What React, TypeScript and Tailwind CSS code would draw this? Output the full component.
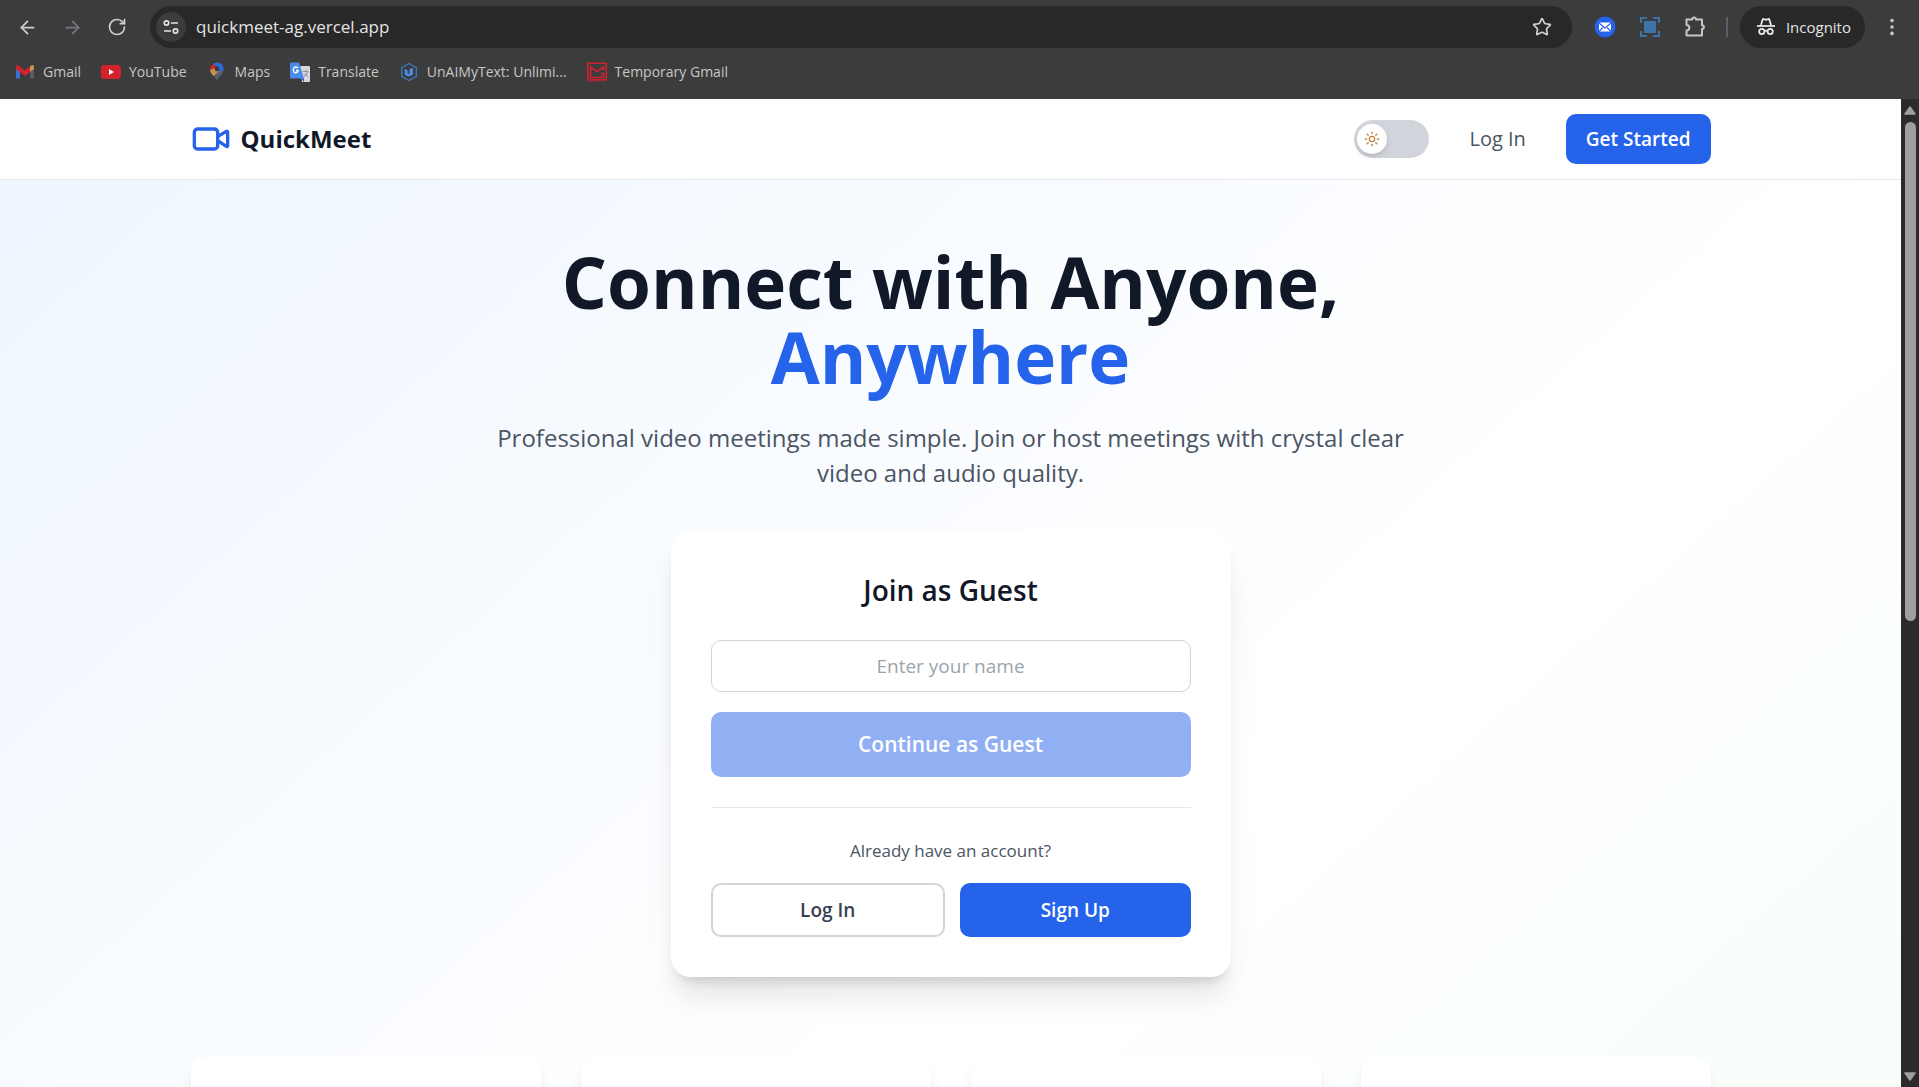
import { useState } from "react";
import type { ReactNode } from "react";
import {
  ArrowLeft,
  ArrowRight,
  EllipsisVertical,
  RotateCw,
  Star,
  Sun,
  Video,
} from "lucide-react";

type Bookmark = {
  label: string;
  icon: ReactNode;
};

function GmailIcon() {
  return (
    <svg viewBox="0 0 20 20" className="size-5">
      <path d="M1 6v10.500h4V9z" fill="#3f6fd0" />
      <path d="M15 9v7.500h4V6z" fill="#5a5b66" />
      <path d="M15 4.500 17 3q2-.5 2 2v2l-4 3z" fill="#c8954f" />
      <path d="M1 7V5q0-2.500 2.500-1.500L10 8.500l5-4V10l-5 4-9-7z" fill="#d5202e" />
    </svg>
  );
}

function YouTubeIcon() {
  return (
    <svg viewBox="0 0 20 20" className="size-5">
      <rect x="0" y="3" width="20" height="14" rx="3.500" fill="#d5202e" />
      <path d="M8 7v6l5-3z" fill="#fff" />
    </svg>
  );
}

function MapsIcon() {
  return (
    <svg viewBox="0 0 20 20" className="size-5">
      <path d="M10 19.500C9.500 16 6 13.500 4 10l9-1.500L16.500 9c-1.500 4-5.500 6-6.500 10.500z" fill="#5d5e6b" />
      <path d="M3 7.500 8 5l4 4-5.500 5C4.500 12 3 10 3 7.500z" fill="#c8954f" />
      <path d="M4 4q2.500-3 6-3.500L8 6 3.500 8Q3 6 4 4z" fill="#d5202e" />
      <path d="M6 2q6-4 10 2l.7 4L13 10 9.500 4.500z" fill="#2b6be0" />
      <circle cx="10" cy="7" r="2.400" fill="#3c3c3c" />
    </svg>
  );
}

function TranslateIcon() {
  return (
    <svg viewBox="0 0 20 20" className="size-5">
      <path d="M9 4h10q1 0 1 1v14q0 1-1 1h-7z" fill="#d5d8dc" />
      <path d="M13 9.500h5.500M16 8v1.500M17.500 10q-1 3.500-4 5M14.500 11.500l3.500 3.500" stroke="#8d9196" strokeWidth="1" fill="none" />
      <path d="M0 1.500Q0 .5 1 .5h8l5 16H1q-1 0-1-1z" fill="#4b8bea" />
      <path d="m11 16.500 3 3.500v-3.500z" fill="#2c5fb8" />
      <path d="M8 6Q5.500 4 4 6t0 4 4-.5V8.500H6" stroke="#fff" strokeWidth="1.300" fill="none" />
    </svg>
  );
}

function HexagonIcon() {
  return (
    <svg viewBox="0 0 20 20" className="size-5">
      <path d="m10 1.500 7.300 4.200v8.600L10 18.500l-7.300-4.200V5.700z" fill="none" stroke="#3f76b8" strokeWidth="1.400" />
      <path d="M5.500 7 8.500 8v3.500l2 .5V7l3.500-1v6.500L10 14.500 6 13z" fill="#4b8bea" />
    </svg>
  );
}

function TemporaryMailIcon() {
  return (
    <svg viewBox="0 0 20 20" className="size-5" fill="none" stroke="#d5202e">
      <rect x=".7" y="1.200" width="18.600" height="16.600" strokeWidth="1.400" />
      <path d="M16.500 8V5L10 9.500 3.500 5v10.500h13v-4H14" strokeWidth="1.700" />
      <path d="M1 19h18" strokeWidth="1.200" strokeDasharray="1.200 1" />
    </svg>
  );
}

const bookmarks: Bookmark[] = [
  { label: "Gmail", icon: <GmailIcon /> },
  { label: "YouTube", icon: <YouTubeIcon /> },
  { label: "Maps", icon: <MapsIcon /> },
  { label: "Translate", icon: <TranslateIcon /> },
  { label: "UnAIMyText: Unlimi...", icon: <HexagonIcon /> },
  { label: "Temporary Gmail", icon: <TemporaryMailIcon /> },
];

function SiteSettingsIcon() {
  return (
    <svg viewBox="0 0 20 20" className="size-5" fill="none" stroke="#e3e3e3" strokeWidth="1.700">
      <circle cx="5.500" cy="6" r="2.200" />
      <path d="M10 6h7M3 14h7" />
      <circle cx="14.500" cy="14" r="2.200" />
    </svg>
  );
}

function MailExtensionIcon() {
  return (
    <svg viewBox="0 0 22 22" className="size-[22px]">
      <circle cx="11" cy="11" r="10.500" fill="#2563eb" />
      <rect x="5" y="6.500" width="12" height="9" rx="1" fill="#fff" />
      <path d="m5 7 6 5 6-5M5 15.500l4-4M17 15.500l-4-4" fill="none" stroke="#2563eb" strokeWidth="1.100" />
    </svg>
  );
}

function CaptureExtensionIcon() {
  return (
    <svg viewBox="0 0 20 20" className="size-5">
      <rect x="4" y="4" width="12" height="12" fill="#3d73a8" />
      <path
        d="M1 6V1h6M13 1h6v5M19 14v5h-6M7 19H1v-5"
        fill="none"
        stroke="#3d73a8"
        strokeWidth="2"
      />
    </svg>
  );
}

function ExtensionsIcon() {
  return (
    <svg viewBox="0 0 22 22" className="size-[22px]" fill="none" stroke="#c7c7c7" strokeWidth="2" strokeLinejoin="round">
      <path d="M2.500 3.500h5.700a1.900 1.900 0 0 1 3.800 0h6v5.700a1.900 1.900 0 0 1 0 3.800v6.500H2.500v-5a2.600 2.600 0 0 0 0-5.600z" />
    </svg>
  );
}

function IncognitoIcon() {
  return (
    <svg viewBox="0 0 20 20" className="size-5" fill="none" stroke="#e8e8e8" strokeWidth="1.800">
      <path d="m5 8 1.600-5.300q.3-.9 1.200-.6l2.200.6 2.200-.6q.9-.3 1.200.6L15 8" />
      <path d="M1 9h18" />
      <circle cx="5.800" cy="14.500" r="2.600" />
      <circle cx="14.200" cy="14.500" r="2.600" />
      <path d="M8.400 14q1.600-.8 3.200 0" />
    </svg>
  );
}

function BrowserBar() {
  return (
    <header className="shrink-0 bg-[#3c3c3c] text-[#e3e3e3]">
      <div className="flex h-[54px] items-center pr-4 pl-[17px]">
        <div className="flex items-center gap-6 text-[#d0d0d0]">
          <button type="button" aria-label="Back">
            <ArrowLeft className="size-[21px]" />
          </button>
          <button type="button" aria-label="Forward" className="text-[#77777f]">
            <ArrowRight className="size-[21px]" />
          </button>
          <button type="button" aria-label="Reload">
            <RotateCw className="size-5" />
          </button>
        </div>
        <div className="ml-[23px] flex h-[42px] flex-1 items-center rounded-full bg-[#282828] pr-5 pl-[6px]">
          <button
            type="button"
            aria-label="Site information"
            className="flex size-[30px] items-center justify-center rounded-full bg-[#3c3c3c]"
          >
            <SiteSettingsIcon />
          </button>
          <input
            type="text"
            aria-label="Address"
            defaultValue="quickmeet-ag.vercel.app"
            className="ml-[10px] min-w-0 flex-1 bg-transparent text-[17px] outline-none"
          />
          <button type="button" aria-label="Bookmark this page">
            <Star className="size-5 text-[#d0d0d0]" />
          </button>
        </div>
        <div className="ml-[22px] flex items-center gap-6">
          <button type="button" aria-label="Mail extension">
            <MailExtensionIcon />
          </button>
          <button type="button" aria-label="Capture extension">
            <CaptureExtensionIcon />
          </button>
          <button type="button" aria-label="Extensions">
            <ExtensionsIcon />
          </button>
        </div>
        <div className="ml-5 h-5 w-[2px] bg-[#5d5e6b]" />
        <button
          type="button"
          className="ml-3 flex h-[42px] items-center gap-[10px] rounded-full bg-[#282828] pr-[14px] pl-4 text-[15px]"
        >
          <IncognitoIcon />
          Incognito
        </button>
        <button type="button" aria-label="Menu" className="ml-4">
          <EllipsisVertical className="size-[22px] text-[#c7c7c7]" />
        </button>
      </div>
      <nav className="flex h-[45px] items-start gap-5 px-[15px] pt-2 text-[14px] leading-5 text-[#c7c7c7]">
        {bookmarks.map((bookmark) => (
          <a key={bookmark.label} href="#" className="flex items-center gap-2">
            {bookmark.icon}
            {bookmark.label}
          </a>
        ))}
      </nav>
    </header>
  );
}

function SiteNav() {
  const [dark, setDark] = useState(false);

  return (
    <nav className="border-b border-gray-200 bg-white">
      <div className="mx-auto flex h-20 max-w-[1600px] items-center justify-between px-10">
        <a href="#" className="flex items-center gap-[10px]">
          <Video className="size-10 text-[#2563eb]" />
          <span className="text-2xl font-bold text-[#111827]">QuickMeet</span>
        </a>
        <div className="flex items-center gap-10">
          <button
            type="button"
            role="switch"
            aria-checked={dark}
            aria-label="Dark mode"
            onClick={() => setDark(!dark)}
            className={
              dark
                ? "flex h-[38px] w-[75px] items-center justify-end rounded-full bg-[#2563eb] px-[3px]"
                : "flex h-[38px] w-[75px] items-center rounded-full bg-[#d1d5db] px-[3px]"
            }
          >
            <span className="flex size-[30px] items-center justify-center rounded-full bg-white shadow-md">
              <Sun className="size-4 text-[#c8803f]" />
            </span>
          </button>
          <a href="#" className="text-xl font-medium text-[#4b5563]">
            Log In
          </a>
          <a
            href="#"
            className="flex h-[50px] items-center rounded-[10px] bg-[#2563eb] px-5 text-[19px] font-semibold text-white"
          >
            Get Started
          </a>
        </div>
      </div>
    </nav>
  );
}

function GuestCard() {
  const [name, setName] = useState("");

  return (
    <section className="mx-auto mt-10 w-full max-w-[560px] rounded-[20px] bg-white p-10 shadow-[0_25px_31px_-6px_rgba(0,0,0,0.1),0_10px_12px_-7px_rgba(0,0,0,0.15)]">
      <h2 className="text-[28px] leading-10 font-semibold text-[#111827]">
        Join as Guest
      </h2>
      <form className="mt-[30px]" onSubmit={(e) => e.preventDefault()}>
        <input
          type="text"
          aria-label="Your name"
          placeholder="Enter your name"
          value={name}
          onChange={(e) => setName(e.target.value)}
          className="h-[52px] w-full rounded-[10px] border border-[#d1d5db] bg-white px-4 text-center text-[19px] text-[#111827] placeholder:text-[#9ca3af]"
        />
        <button
          type="submit"
          disabled={!name}
          className="mt-5 h-[65px] w-full rounded-[10px] bg-[#2563eb] text-[21px] font-semibold text-white disabled:opacity-50"
        >
          Continue as Guest
        </button>
      </form>
      <div className="mt-[30px] border-t border-gray-200 pt-[30px]">
        <p className="text-[17px] leading-[25px] text-[#4b5563]">
          Already have an account?
        </p>
        <div className="mt-5 flex gap-[15px] text-[19px]">
          <a
            href="#"
            className="flex h-[54px] flex-1 items-center justify-center rounded-[10px] border-2 border-[#d1d5db] font-semibold text-[#374151]"
          >
            Log In
          </a>
          <a
            href="#"
            className="flex h-[54px] flex-1 items-center justify-center rounded-[10px] bg-[#2563eb] font-semibold text-white"
          >
            Sign Up
          </a>
        </div>
      </div>
    </section>
  );
}

function Scrollbar() {
  return (
    <div className="flex w-[18px] shrink-0 flex-col items-center bg-[#2b2b2b] py-1">
      <svg viewBox="0 0 12 16" className="h-4 w-3 shrink-0">
        <path d="M6 4 11 11H1z" fill="#9f9f9f" stroke="#9f9f9f" strokeWidth="1.500" strokeLinejoin="round" />
      </svg>
      <div className="my-[3px] min-h-0 w-full flex-1 px-[3px]">
        <div className="mx-auto h-[53%] w-[11px] rounded-full bg-[#9f9f9f]" />
      </div>
      <svg viewBox="0 0 12 16" className="h-4 w-3 shrink-0">
        <path d="M6 13 1 6h10z" fill="#9f9f9f" stroke="#9f9f9f" strokeWidth="1.500" strokeLinejoin="round" />
      </svg>
    </div>
  );
}

export default function App() {
  return (
    <div className="flex h-screen flex-col overflow-hidden font-['Open_Sans','Noto_Sans',sans-serif]">
      <BrowserBar />
      <div className="flex min-h-0 flex-1">
        <div className="min-w-0 flex-1 overflow-hidden bg-white">
          <SiteNav />
          <main className="min-h-[155vh] bg-gradient-to-br from-[#eff6ff] via-white to-[#f0fdf4]">
            <div className="mx-auto max-w-[1600px] px-10 pt-16 text-center">
              <h1 className="text-[71px] leading-[75px] font-bold text-[#111827]">
                Connect with Anyone,
                <span className="block text-[#2563eb]">Anywhere</span>
              </h1>
              <p className="mx-auto mt-[26px] max-w-[960px] text-2xl leading-[35px] text-[#4b5563]">
                Professional video meetings made simple. Join or host meetings
                with crystal clear video and audio quality.
              </p>
              <GuestCard />
              <div className="mt-20 grid grid-cols-4 gap-10">
                {[0, 1, 2, 3].map((i) => (
                  <div
                    key={i}
                    className="h-60 rounded-[15px] bg-white shadow-lg"
                  />
                ))}
              </div>
            </div>
          </main>
        </div>
        <Scrollbar />
      </div>
    </div>
  );
}
